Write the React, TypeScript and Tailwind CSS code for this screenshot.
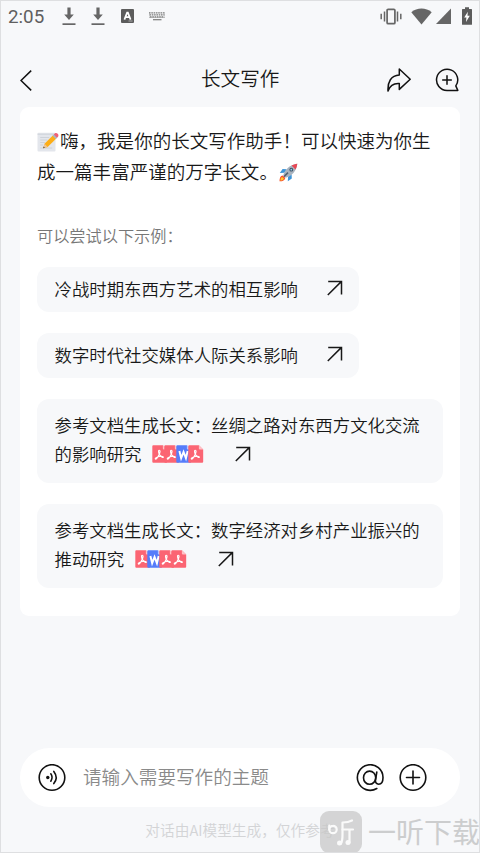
import type { ReactNode } from 'react';

type DocType = 'pdf' | 'word';

interface Example {
    lines: string[];
    docs?: DocType[];
}

const EXAMPLES: Example[] = [
    { lines: ['冷战时期东西方艺术的相互影响'] },
    { lines: ['数字时代社交媒体人际关系影响'] },
    { lines: ['参考文档生成长文：丝绸之路对东西方文化交流', '的影响研究'], docs: ['pdf', 'pdf', 'word', 'pdf'] },
    { lines: ['参考文档生成长文：数字经济对乡村产业振兴的', '推动研究'], docs: ['pdf', 'word', 'pdf', 'pdf'] },
];

function DownloadIcon() {
    return (
        <svg width="14" height="19" viewBox="0 0 14 19" fill="#666">
            <path d="M5.4 0.5h3.2v7h3.2L7 13 2.2 7.5h3.2z" />
            <rect x="0.5" y="16.3" width="13" height="1.7" />
        </svg>
    );
}

function StatusBar() {
    return (
        <div className="flex h-[30px] items-center pl-[7px] pr-[7px] text-[#5f5f5f]">
            <span className="w-[54px] pt-px font-['Roboto',sans-serif] text-[18.8px] leading-[30px]">2:05</span>
            <DownloadIcon />
            <span className="w-[15px]" />
            <DownloadIcon />
            <svg className="ml-4" width="13" height="14" viewBox="0 0 13 14">
                <rect width="13" height="14" rx="1" fill="#5c5c5c" />
                <path d="M3.4 10.6 6.1 3.6h.8l2.7 7M4.4 8.2h4.2" fill="none" stroke="#fff" strokeWidth="1.7" />
                <path d="M7.5 12h4" stroke="#aaa" strokeWidth="1" />
            </svg>
            <svg className="ml-[15px]" width="16" height="9" viewBox="0 0 16 9" stroke="#7b7b7b" fill="none">
                <path d="M0 .8h16M.5 2.8h15M1 4.8h14" strokeDasharray="1.6 .7" strokeWidth="1.3" />
                <path d="M0 0v5.5h16V0" strokeWidth=".7" opacity=".6" />
                <path d="M4 7.7h8.5" strokeWidth="1.2" />
            </svg>
            <div className="grow" />
            <svg width="22" height="17" viewBox="0 0 22 17" fill="none" stroke="#666">
                <rect x="7.1" y="1.3" width="7.8" height="14.4" rx="1" strokeWidth="1.7" />
                <path d="M4.5 3.5v10M17.5 3.5v10" strokeWidth="1.5" />
                <path d="M1.2 5.8v5.4M20.8 5.8v5.4" strokeWidth="1.5" />
            </svg>
            <svg className="ml-[9px]" width="21" height="17" viewBox="0 0 21 17" fill="#666">
                <path d="M.3 4.2C6-.8 15-.8 20.7 4.2L10.5 16.5z" />
            </svg>
            <svg className="ml-[4px]" width="15" height="16" viewBox="0 0 15 16" fill="#666">
                <path d="M15 .5V16H0z" />
            </svg>
            <svg className="ml-[11px]" width="10" height="18" viewBox="0 0 10 18">
                <path d="M3 .3h4v1.8h2.4q.6 0 .6.7v14.4q0 .6-.6.6H.6q-.6 0-.6-.6V2.8q0-.7.6-.7H3z" fill="#5c5c5c" />
                <path d="M5.8 4.8 2.2 10.6h2.2l-.4 4.4 3.8-6.2H5.5z" fill="#fff" />
            </svg>
        </div>
    );
}

function Header() {
    return (
        <header className="flex h-[54px] items-center pl-[19px] pr-[20px]">
            <svg width="12" height="21" viewBox="0 0 12 21" fill="none" stroke="#111" strokeWidth="1.5">
                <path d="M11.2 .6 1 10.5l10.2 9.9" />
            </svg>
            <h1 className="ml-[169px] w-[78px] pb-[5px] font-[350] whitespace-nowrap text-[19.6px] leading-8">长文写作</h1>
            <svg className="ml-[108px]" width="24" height="24" viewBox="0 0 24 24" fill="none" stroke="#111" strokeWidth="1.5" strokeLinejoin="round">
                <path d="M12.3 1 23.2 11.2 12.3 21.4v-5.8C7 15.2 3 17.5 1 23 .5 14 4 7.4 12.3 7z" />
            </svg>
            <svg className="ml-[24px]" width="24" height="24" viewBox="0 0 24 24" fill="none" stroke="#111" strokeWidth="1.5" strokeLinecap="round" strokeLinejoin="round">
                <path d="M12 22.4A10.6 10.6 0 1 1 20.8 17.9L22.8 22.4z" />
                <path d="M12 7.7v8.6M7.7 12h8.6" />
            </svg>
        </header>
    );
}

function MemoEmoji() {
    return (
        <svg className="mr-[1px] inline-block align-[-4px]" width="22" height="20" viewBox="0 0 22 20">
            <rect x=".5" y=".7" width="18" height="18.8" rx="1" fill="#e3e6ec" />
            <path d="M.5 2.2h18M3.2 5.5h9M3.2 8h7M3.2 10.5h5M3.2 13h3M3.2 16h12" stroke="#c9ced6" strokeWidth=".8" />
            <path d="M6.2 16.3 7.5 11.7 16.3 3l3.2 3.2-8.8 8.8z" fill="#fcae18" />
            <path d="m7.5 11.7-1.3 4.6 4.5-1.3z" fill="#edc398" />
            <path d="m6.7 14.6-.5 1.7 1.7-.5z" fill="#444" />
            <path d="m15.6 3.7 1.5-1.5 3.2 3.2-1.5 1.5z" fill="#a9b6c4" />
            <path d="m16.8 2.5 1-1c1.8-1.6 4.8 1.4 3.2 3.2l-1 1z" fill="#ef6177" />
        </svg>
    );
}

function RocketEmoji() {
    return (
        <svg className="ml-[1px] inline-block align-[-3px]" width="19" height="19" viewBox="0 0 19 19">
            <path d="M7.8 6.2 3.6 6 .8 10l4.6-.3zM12.6 11.2l.2 4.2-4 2.8.3-4.7z" fill="#3c94d8" />
            <path d="M3.8 12.6C1.2 13 .6 15.2.5 18.3c3 .1 5.4-.9 5.8-3.4z" fill="#f4522f" />
            <path d="M3.2 14c-1.4.5-1.8 2-1.8 3.5 1.5 0 3-.5 3.5-2z" fill="#ffc928" />
            <path d="M4.2 12.3C6 6.4 10.5 1.8 18.3.7 17.4 8.3 12.7 13 6.7 14.8z" fill="#a8b3bf" />
            <path d="M12.5 2.5C14.2 1.5 16 1 18.3.7c-.2 2.2-.8 4.1-1.7 5.8z" fill="#e84855" />
            <circle cx="12.3" cy="6.7" r="1.9" fill="#40505f" />
            <circle cx="12.3" cy="6.7" r=".9" fill="#8cc9ed" />
            <path d="m5 13.6 4-4" stroke="#52606f" strokeWidth="1.5" />
        </svg>
    );
}

function DocIcon({ type }: { type: DocType }) {
    return (
        <svg className="-mr-[3.5px] shrink-0" width="15.5" height="18" viewBox="0 0 15 18" preserveAspectRatio="none">
            <path d="M1.3.3h9.2L14.7 4.5v12.2q0 1-1 1H1.3q-1 0-1-1V1.3q0-1 1-1z" fill={type === 'pdf' ? '#fb6573' : '#557cfa'} />
            <path d="M10.5.3v3.2q0 1 1 1h3.2z" fill={type === 'pdf' ? '#ffc2c7' : '#b8c8ff'} />
            {type === 'pdf' ? (
                <path
                    d="M6.9 5.2c1.5 0 .8 2.6 0 4.2-.9 2-2.2 4.5-3.2 4.7-1.2 0-.2-1.7 2.3-2.4 2.3-.7 5-.7 5 .3 0 1.2-2.7-.4-3.9-2.8C6.3 7.7 6 5.2 6.9 5.2z"
                    fill="none"
                    stroke="#fff"
                    strokeWidth="1.1"
                />
            ) : (
                <path d="m3.3 6 1.7 7.2L7.3 7l2.3 6.2L11.3 6" fill="none" stroke="#fff" strokeWidth="1.9" />
            )}
        </svg>
    );
}

function ArrowIcon() {
    return (
        <svg width="16" height="16" viewBox="0 0 16 16" fill="none" stroke="#181818" strokeWidth="1.5">
            <path d="M1.2 1.4h13.3v13.2M14.5 1.4.8 15" />
        </svg>
    );
}

function ExampleChip({ example }: { example: Example }) {
    const { lines, docs } = example;
    const last = lines[lines.length - 1];

    return (
        <button
            className={`flex flex-col rounded-[12px] bg-[#f7f8fa] pl-[17.5px] text-left text-[17.4px] leading-[29px] font-[350] whitespace-nowrap ${docs ? 'h-[84px] w-[406px] pt-[11px]' : 'h-[45px] w-[322px] pt-[7px]'}`}
        >
            {lines.slice(0, -1).map((line) => (
                <span key={line}>{line}</span>
            ))}
            <span className="flex items-center">
                {last}
                {docs && (
                    <span className="ml-[11px] flex w-[54px]">
                        {docs.map((type, i) => (
                            <DocIcon key={i} type={type} />
                        ))}
                    </span>
                )}
                <span className={docs ? 'ml-[29px]' : 'ml-[29px] pb-[2px]'}>
                    <ArrowIcon />
                </span>
            </span>
        </button>
    );
}

function RoundIcon({ children }: { children: ReactNode }) {
    return (
        <svg width="28" height="28" viewBox="0 0 28 28" fill="none" stroke="#111" strokeWidth="1.6" strokeLinecap="round">
            {children}
        </svg>
    );
}

function InputBar() {
    return (
        <div className="mx-[19px] flex h-[59px] items-center rounded-full bg-white pl-[18px] pr-[33px]">
            <RoundIcon>
                <circle cx="14" cy="13.5" r="12.8" />
                <circle cx="9.8" cy="13.5" r="1.7" fill="#111" stroke="none" />
                <path d="M12.8 9.8q2.6 3.7 0 7.4M15.8 7.4q4.8 6.1 0 12.2" />
            </RoundIcon>
            <span className="ml-[17px] grow pb-[3px] text-[18.6px] leading-7 font-[350] text-[#8a8a8a]">请输入需要写作的主题</span>
            <RoundIcon>
                <path d="M20.8 24.5A12.8 12.8 0 1 1 27 13.5c0 4.3-1.8 6.7-4.3 6.7-2.3 0-3.5-1.5-3.2-4.2L20.8 8" />
                <ellipse cx="13.6" cy="13.7" rx="6.1" ry="6.6" />
            </RoundIcon>
            <span className="w-[15px]" />
            <RoundIcon>
                <circle cx="14" cy="13.5" r="12.8" />
                <path d="M14 7v13M7.5 13.5h13" />
            </RoundIcon>
        </div>
    );
}

// Site mark laid over the bottom right corner of the screen
function Watermark() {
    return (
        <div className="absolute -right-px -bottom-px flex h-[42px] w-[160px] items-center text-[#cccdce]">
            <svg className="shrink-0" width="42" height="42" viewBox="0 0 42 42" fill="none">
                <rect width="42" height="42" rx="9" fill="#c6c6c6" fillOpacity=".72" />
                <g stroke="#fafafa" strokeWidth="2.2" strokeLinecap="round" strokeLinejoin="round">
                    <circle cx="13" cy="18.5" r="3.7" />
                    <path d="M9.3 14.5v4M32 9.5c-3 1.7-6 2-9.5 2v12c0 4-.2 7-1.5 9" />
                    <path d="M22.5 18.5H33M29.5 18.5v13" />
                </g>
                <circle cx="19.5" cy="32" r="2.5" fill="#fafafa" />
                <circle cx="28" cy="31.5" r="2.5" fill="#fafafa" />
            </svg>
            <span className="ml-[6px] pb-[2px] whitespace-nowrap text-[28px] leading-[40px] font-normal">一听下载</span>
        </div>
    );
}

export default function App() {
    return (
        <div className="relative flex h-[853px] w-[480px] flex-col overflow-hidden border border-[#dedfe1] bg-[#f7f8fa] font-['Noto_Sans_CJK_SC',sans-serif] text-[#181818]">
            <StatusBar />
            <div className="h-[22px]" />
            <Header />
            <main className="mx-[19px] h-[509px] rounded-[9px] bg-white pt-[17px] pl-[17px]">
                <p className="text-[18.55px] leading-[31px] font-[350] whitespace-nowrap">
                    <MemoEmoji />
                    嗨，我是你的长文写作助手！可以快速为你生
                    <br />
                    成一篇丰富严谨的万字长文。
                    <RocketEmoji />
                </p>
                <p className="mt-[37px] text-[16.2px] leading-6 font-[350] text-[#777]">可以尝试以下示例：</p>
                <div className="mt-[20px] flex flex-col gap-[21px]">
                    {EXAMPLES.map((example) => (
                        <ExampleChip key={example.lines[0]} example={example} />
                    ))}
                </div>
            </main>
            <div className="grow" />
            <InputBar />
            <p className="mt-[12px] mb-[11px] text-center text-[14.7px] leading-[22px] font-[350] text-[#d3d4d6]">对话由AI模型生成，仅作参考</p>
            <Watermark />
        </div>
    );
}
